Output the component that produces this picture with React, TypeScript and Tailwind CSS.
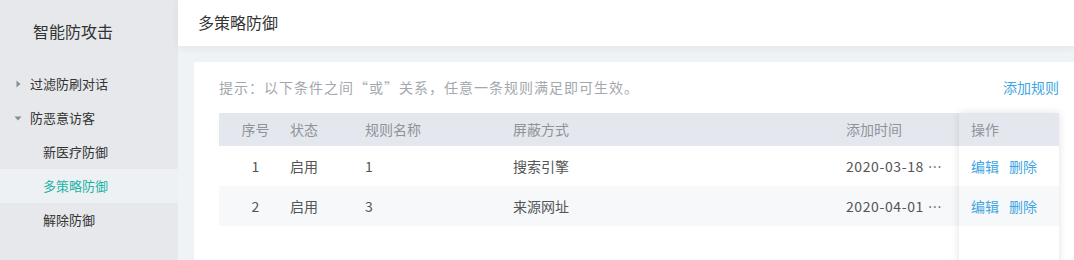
const menu = [
  { name: '过滤防刷对话', level: 1, open: false },
  { name: '防恶意访客', level: 1, open: true },
  { name: '新医疗防御', level: 2 },
  { name: '多策略防御', level: 2, active: true },
  { name: '解除防御', level: 2 },
];

const rules = [
  { id: 1, status: '启用', name: '1', method: '搜索引擎', time: '2020-03-18 10:21:35' },
  { id: 2, status: '启用', name: '3', method: '来源网址', time: '2020-04-01 16:08:52' },
];

function Caret({ open }: { open?: boolean }) {
  return (
    <svg width="8" height="8" viewBox="0 0 8 8" className="mr-[8px]">
      {open ? <path d="M0.5 2.5 L7.5 2.5 L4 6.5 Z" fill="#8a8e94" /> : <path d="M2.5 0.5 L6.5 4 L2.5 7.5 Z" fill="#8a8e94" />}
    </svg>
  );
}

export default function App() {
  return (
    <div
      className="flex h-[260px] w-[1074px] overflow-hidden bg-[#f0f3f6] text-[14px]"
      style={{ fontFamily: '"Noto Sans CJK SC", "Noto Sans", sans-serif' }}
    >
      {/* Sidebar */}
      <aside className="w-[178px] shrink-0 bg-[#e6e8eb]">
        <div className="flex h-[67px] items-center pb-[6px] pl-[33px] text-[16px] text-[#333]">智能防攻击</div>
        <ul>
          {menu.map((m) => (
            <li
              key={m.name}
              className={
                'flex h-[34px] items-center text-[13px] ' +
                (m.level === 1 ? 'pl-[14px] ' : 'pl-[43px] ') +
                (m.active ? 'bg-[#eef1f4] text-[#1fb3a5]' : 'text-[#333]')
              }
            >
              {m.level === 1 && <Caret open={m.open} />}
              {m.name}
            </li>
          ))}
        </ul>
      </aside>

      {/* Main */}
      <div className="flex min-w-0 flex-1 flex-col">
        <header className="relative z-10 flex h-[46px] shrink-0 items-center bg-white pb-[2px] pl-[20px] text-[16px] text-[#333] shadow-[0_2px_8px_rgba(0,0,0,0.06)]">
          多策略防御
        </header>
        <div className="flex-1 pl-[16px] pt-[16px]">
          <div className="h-full bg-white pl-[25px] pr-[15px]">
            <div className="flex h-[51px] items-center justify-between">
              <span className="tracking-[1px] text-[#a4a8ad]">提示：以下条件之间“或”关系，任意一条规则满足即可生效。</span>
              <span className="text-[#3fa6e3]">添加规则</span>
            </div>
            <div className="flex h-[160px]">
              <div className="w-[740px]">
                <div className="flex h-[33px] items-center bg-[#e4e8ee] text-[#909399]">
                  <div className="w-[61px] pl-[12px] text-center">序号</div>
                  <div className="w-[75px] pl-[10px]">状态</div>
                  <div className="w-[148px] pl-[10px]">规则名称</div>
                  <div className="w-[333px] pl-[10px]">屏蔽方式</div>
                  <div className="w-[123px] pl-[10px]">添加时间</div>
                </div>
                {rules.map((r, i) => (
                  <div
                    key={r.id}
                    className={'flex h-[40px] items-center text-[#555] ' + (i % 2 === 1 ? 'bg-[#f7f8fa]' : 'bg-white')}
                  >
                    <div className="w-[61px] pl-[12px] text-center">{r.id}</div>
                    <div className="w-[75px] pl-[10px]">{r.status}</div>
                    <div className="w-[148px] pl-[10px]">{r.name}</div>
                    <div className="w-[333px] pl-[10px]">{r.method}</div>
                    <div className="w-[123px] truncate pl-[10px] pr-[14px] tracking-[0.6px]">{r.time}</div>
                  </div>
                ))}
              </div>
              <div className="w-[100px] shrink-0 bg-white shadow-[0_0_8px_rgba(0,0,0,0.12)]">
                <div className="flex h-[33px] items-center bg-[#e4e8ee] pl-[12px] text-[#909399]">操作</div>
                {rules.map((r, i) => (
                  <div
                    key={r.id}
                    className={'flex h-[40px] items-center gap-[10px] pl-[12px] text-[#3fa6e3] ' + (i % 2 === 1 ? 'bg-[#f7f8fa]' : 'bg-white')}
                  >
                    <span>编辑</span>
                    <span>删除</span>
                  </div>
                ))}
              </div>
            </div>
          </div>
        </div>
      </div>
    </div>
  );
}
